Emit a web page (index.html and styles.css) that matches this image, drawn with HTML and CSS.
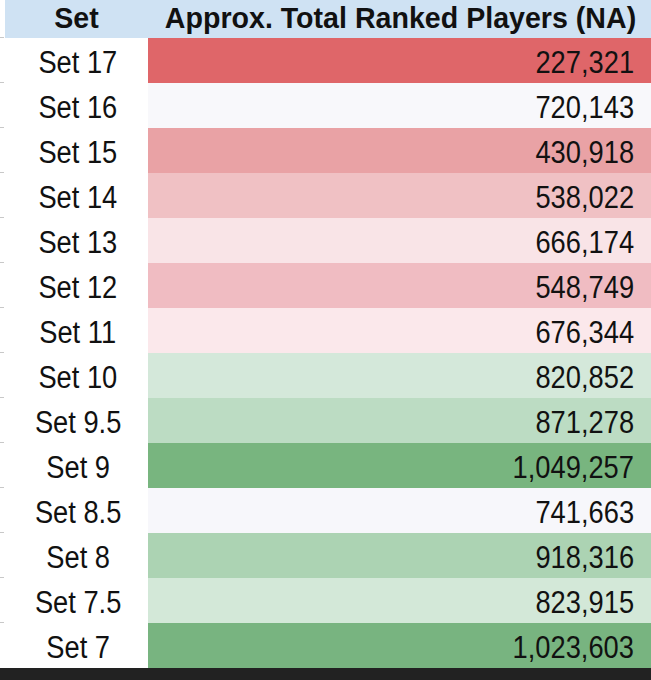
FILE: index.html
```html
<!DOCTYPE html>
<html>
<head>
<meta charset="utf-8">
<link rel="stylesheet" href="styles.css">
</head>
<body>
<div class="sheet">
  <div class="table">
    <div class="gut"></div><div class="hd set">Set</div><div class="hd val">Approx. Total Ranked Players (NA)</div>
    <div class="gut"></div><div class="cell set"><span>Set 17</span></div><div class="cell val c17"><span>227,321</span></div>
    <div class="gut"></div><div class="cell set"><span>Set 16</span></div><div class="cell val c16"><span>720,143</span></div>
    <div class="gut"></div><div class="cell set"><span>Set 15</span></div><div class="cell val c15"><span>430,918</span></div>
    <div class="gut"></div><div class="cell set"><span>Set 14</span></div><div class="cell val c14"><span>538,022</span></div>
    <div class="gut"></div><div class="cell set"><span>Set 13</span></div><div class="cell val c13"><span>666,174</span></div>
    <div class="gut"></div><div class="cell set"><span>Set 12</span></div><div class="cell val c12"><span>548,749</span></div>
    <div class="gut"></div><div class="cell set"><span>Set 11</span></div><div class="cell val c11"><span>676,344</span></div>
    <div class="gut"></div><div class="cell set"><span>Set 10</span></div><div class="cell val c10"><span>820,852</span></div>
    <div class="gut"></div><div class="cell set"><span>Set 9.5</span></div><div class="cell val c95"><span>871,278</span></div>
    <div class="gut"></div><div class="cell set"><span>Set 9</span></div><div class="cell val c9"><span>1,049,257</span></div>
    <div class="gut"></div><div class="cell set"><span>Set 8.5</span></div><div class="cell val c85"><span>741,663</span></div>
    <div class="gut"></div><div class="cell set"><span>Set 8</span></div><div class="cell val c8"><span>918,316</span></div>
    <div class="gut"></div><div class="cell set"><span>Set 7.5</span></div><div class="cell val c75"><span>823,915</span></div>
    <div class="gut last"></div><div class="cell set"><span>Set 7</span></div><div class="cell val c7"><span>1,023,603</span></div>
  </div>
  <div class="bar"></div>
</div>
</body>
</html>
```
FILE: styles.css
```css
html, body {
  margin: 0;
  padding: 0;
  background: #ffffff;
}
.sheet {
  width: 651px;
  height: 680px;
  display: flex;
  flex-direction: column;
  overflow: hidden;
}
.table {
  display: grid;
  grid-template-columns: 5px 143px 503px;
  grid-template-rows: 38px repeat(14, 45px);
  font-family: "Liberation Sans", Arial, sans-serif;
  color: #111111;
}
.gut {
  border-bottom: 1px solid #c8c8c8;
  box-sizing: border-box;
  margin-right: 1px;
}
.gut.last {
  border-bottom: none;
}
.hd {
  background: #cfe2f3;
  font-weight: bold;
  font-size: 28.6px;
  display: flex;
  align-items: center;
  justify-content: center;
  padding-bottom: 1px;
  box-sizing: border-box;
  white-space: nowrap;
}
.hd.val {
  padding-left: 2px;
}
.cell {
  font-size: 31px;
  display: flex;
  align-items: center;
  padding-top: 5px;
  box-sizing: border-box;
  white-space: nowrap;
}
.cell span {
  display: inline-block;
  transform: scaleX(0.88);
}
.cell.set {
  justify-content: center;
  padding-left: 3px;
}
.cell.val {
  justify-content: flex-end;
  padding-right: 17px;
}
.cell.val span {
  transform-origin: right center;
}
.c17 { background: #df6669; }
.c16 { background: #f8f8fb; }
.c15 { background: #e9a2a5; }
.c14 { background: #f0c1c4; }
.c13 { background: #f9e4e7; }
.c12 { background: #f0bcc2; }
.c11 { background: #fbe8eb; }
.c10 { background: #d4e8da; }
.c95 { background: #bcdcc3; }
.c9  { background: #78b57f; }
.c85 { background: #f7f7fb; }
.c8  { background: #acd3b3; }
.c75 { background: #d3e8d8; }
.c7  { background: #78b480; }
.bar {
  flex: 1;
  background: #222222;
}
```
